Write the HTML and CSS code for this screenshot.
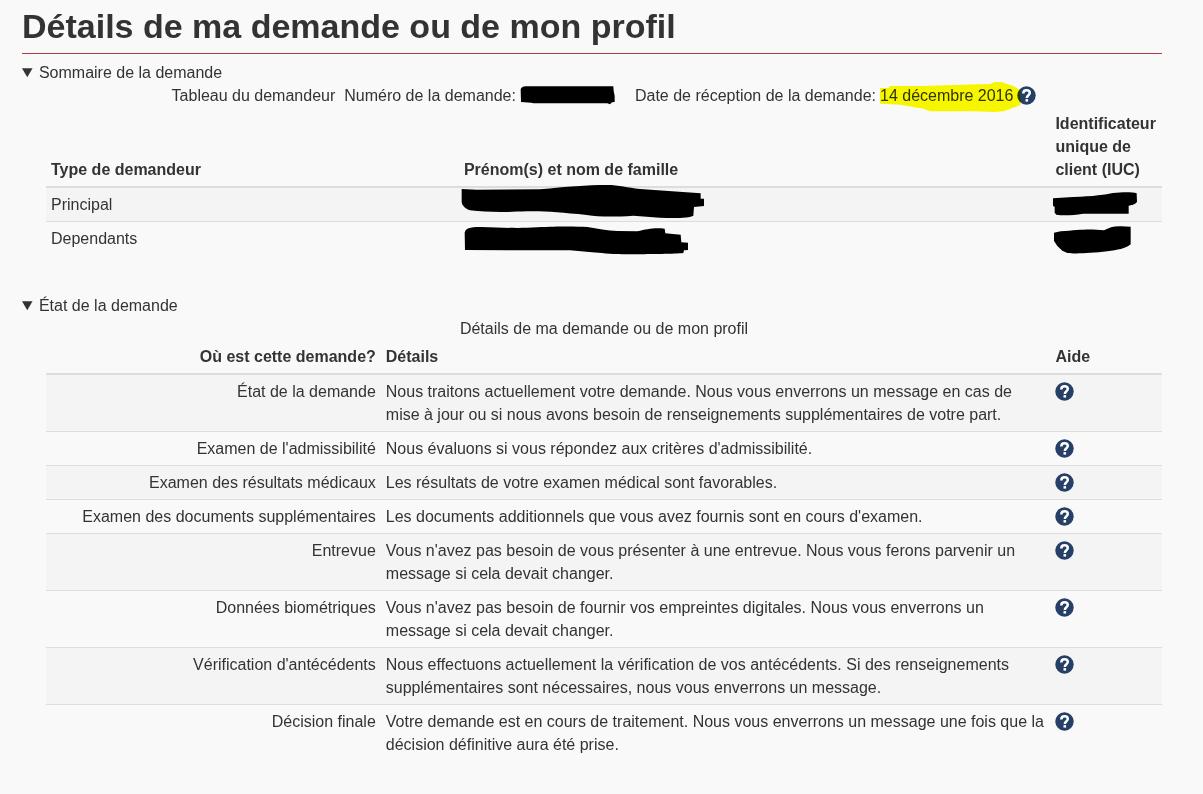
FILE: index.html
```html
<!DOCTYPE html>
<html lang="fr">
<head>
<meta charset="utf-8">
<title>Détails de ma demande ou de mon profil</title>
<link rel="stylesheet" href="styles.css">
</head>
<body>
<svg class="sprite" aria-hidden="true">
  <symbol id="help" viewBox="0 0 19 19">
    <circle class="icon-disc" cx="9.500" cy="9.500" r="9.200"/>
    <path class="icon-hook" d="M6.300 7.400C6.300 5.200 7.500 4.300 9.500 4.300 11.500 4.300 12.800 5.300 12.800 7 12.800 9.200 9.800 9.200 9.800 11.900"/>
    <path class="icon-dot" d="M8.500 13.100H11.100V15.600H8.500Z"/>
  </symbol>
</svg>
<main class="page">
  <h1 class="title">Détails de ma demande ou de mon profil</h1>

  <details class="section" open>
    <summary class="toggle">Sommaire de la demande</summary>
    <div class="panel">
      <table class="grid">
        <caption class="caption"><span class="facts"><span>Tableau du demandeur</span><span class="fact">Numéro de la demande: <svg class="mark-number" viewBox="0 0 285 57" role="img" aria-label="Masqué"><path d="M2 10C4 3 12 0 20 1L280 1 281 15 284 30 284 48 276 49 270 55 262 52 40 52 34 50 3 48Z"/></svg></span><span class="fact fact-date">Date de réception de la demande: <span class="date">14 décembre 2016<svg class="highlight" viewBox="0 0 423 90" aria-hidden="true"><path d="M0 18L25 18 30 12 130 12 240 8 330 6 345 0 365 0 400 12 420 24 422 68 405 76 370 88 345 90 280 88 150 88 130 80 60 68 0 65Z"/></svg></span><a class="help" href="#" aria-label="Aide"><svg class="icon"><use href="#help"/></svg></a></span></span></caption>
        <colgroup><col class="col-type"><col><col class="col-end"></colgroup>
        <thead>
          <tr><th scope="col">Type de demandeur</th><th scope="col">Prénom(s) et nom de famille</th><th scope="col">Identificateur unique de client (IUC)</th></tr>
        </thead>
        <tbody>
          <tr>
            <td>Principal</td>
            <td class="masked"><svg class="mark mark-name-1" viewBox="0 0 735 105" role="img" aria-label="Masqué"><path d="M5 12L50 14 240 13C320 5 380 0 440 0 480 0 500 8 540 12L722 25 722 41 732 41 732 63 702 66 700 92C690 98 650 101 600 98L520 92C460 96 420 96 380 90 300 82 260 78 200 79 130 82 80 82 30 76 12 68 6 60 5 50Z"/></svg></td>
            <td class="masked"><svg class="mark mark-id-1" viewBox="0 0 255 72" role="img" aria-label="Masqué"><path d="M0 19L60 15C120 13 160 8 180 3 210 0 240 0 251 4L252 30C245 38 235 40 227 41L227 65 90 65C60 70 30 71 10 68L5 62 5 44 0 42Z"/></svg></td>
          </tr>
          <tr>
            <td>Dependants</td>
            <td class="masked"><svg class="mark mark-name-2" viewBox="0 0 675 87" role="img" aria-label="Masqué"><path d="M3 72L2 20C5 8 15 3 50 3 120 5 160 8 220 4 300 0 340 2 370 3 400 8 430 14 460 15L520 16C550 10 565 5 602 8L604 22 650 26 652 49 672 50 672 72 660 73 658 81C620 85 480 85 450 84 380 80 350 74 300 73Z"/></svg></td>
            <td class="masked"><svg class="mark mark-id-2" viewBox="0 0 231 84" role="img" aria-label="Masqué"><path d="M0 20L20 16C80 10 110 8 150 13 165 5 180 0 200 1L230 2 230 55C215 68 190 72 160 76 110 82 60 84 40 81L25 74 10 60 0 45Z"/></svg></td>
          </tr>
        </tbody>
      </table>
    </div>
  </details>

  <details class="section" open>
    <summary class="toggle">État de la demande</summary>
    <div class="panel">
      <table class="grid">
        <caption class="caption">Détails de ma demande ou de mon profil</caption>
        <colgroup><col class="col-label"><col><col class="col-end"></colgroup>
        <thead>
          <tr><th scope="col" class="label">Où est cette demande?</th><th scope="col">Détails</th><th scope="col">Aide</th></tr>
        </thead>
        <tbody>
          <tr><td class="label">État de la demande</td><td>Nous traitons actuellement votre demande. Nous vous enverrons un message en cas de mise à jour ou si nous avons besoin de renseignements supplémentaires de votre part.</td><td><a class="help" href="#" aria-label="Aide"><svg class="icon"><use href="#help"/></svg></a></td></tr>
          <tr><td class="label">Examen de l'admissibilité</td><td>Nous évaluons si vous répondez aux critères d'admissibilité.</td><td><a class="help" href="#" aria-label="Aide"><svg class="icon"><use href="#help"/></svg></a></td></tr>
          <tr><td class="label">Examen des résultats médicaux</td><td>Les résultats de votre examen médical sont favorables.</td><td><a class="help" href="#" aria-label="Aide"><svg class="icon"><use href="#help"/></svg></a></td></tr>
          <tr><td class="label">Examen des documents supplémentaires</td><td>Les documents additionnels que vous avez fournis sont en cours d'examen.</td><td><a class="help" href="#" aria-label="Aide"><svg class="icon"><use href="#help"/></svg></a></td></tr>
          <tr><td class="label">Entrevue</td><td>Vous n'avez pas besoin de vous présenter à une entrevue. Nous vous ferons parvenir un message si cela devait changer.</td><td><a class="help" href="#" aria-label="Aide"><svg class="icon"><use href="#help"/></svg></a></td></tr>
          <tr><td class="label">Données biométriques</td><td>Vous n'avez pas besoin de fournir vos empreintes digitales. Nous vous enverrons un message si cela devait changer.</td><td><a class="help" href="#" aria-label="Aide"><svg class="icon"><use href="#help"/></svg></a></td></tr>
          <tr><td class="label">Vérification d'antécédents</td><td>Nous effectuons actuellement la vérification de vos antécédents. Si des renseignements supplémentaires sont nécessaires, nous vous enverrons un message.</td><td><a class="help" href="#" aria-label="Aide"><svg class="icon"><use href="#help"/></svg></a></td></tr>
          <tr><td class="label">Décision finale</td><td>Votre demande est en cours de traitement. Nous vous enverrons un message une fois que la décision définitive aura été prise.</td><td><a class="help" href="#" aria-label="Aide"><svg class="icon"><use href="#help"/></svg></a></td></tr>
        </tbody>
      </table>
    </div>
  </details>
</main>
</body>
</html>
```

FILE: styles.css
```css
* { box-sizing: border-box; }

body {
  margin: 0;
  background: #f9f9f9;
  color: #333;
  font: 16px/23px "Liberation Sans", Arial, sans-serif;
}

.sprite { position: absolute; width: 0; height: 0; }

.page { padding: 6px 41px 0 22px; }

.title {
  margin: 0 0 7px;
  padding-bottom: 6px;
  border-bottom: 1px solid #af3c43;
  font-size: 34px;
  line-height: 41px;
}

.section { margin-bottom: 39px; }

.toggle { cursor: pointer; }

.panel { padding-left: 24px; }

.grid {
  width: 100%;
  table-layout: fixed;
  border-collapse: separate;
  border-spacing: 0;
}

.col-type { width: 37%; }
.col-label { width: 30%; }
.col-end { width: 10%; }

.caption { text-align: center; }

.facts { display: flex; justify-content: center; gap: 9px; }
.fact { display: flex; gap: 4px; }
.fact-date { margin-left: 11px; }

.grid th,
.grid td {
  padding: 5px;
  text-align: left;
  vertical-align: top;
}

.grid th {
  vertical-align: bottom;
  border-bottom: 2px solid #ddd;
}

.grid tbody tr + tr td { border-top: 1px solid #ddd; }
.grid tbody tr:nth-child(odd) { background: #f4f4f4; }

.grid .label { text-align: right; }

.help { display: flex; align-items: center; height: 23px; }
.icon { width: 19px; height: 19px; }
.icon-disc { fill: #263f66; }
.icon-hook { fill: none; stroke: #fff; stroke-width: 2.5; }
.icon-dot { fill: #fff; }

.date { position: relative; }

.highlight {
  position: absolute;
  top: -2px;
  left: 0;
  z-index: 1;
  width: 141px;
  height: 30px;
  fill: #fcfc00;
  mix-blend-mode: multiply;
}

.mark-number { width: 95px; height: 19px; margin-top: 2px; }

.masked { position: relative; }
.mark { position: absolute; z-index: 1; }
.mark-name-1 { top: -3px; left: 1px; width: 245px; height: 35px; }
.mark-name-2 { top: 4px; left: 5px; width: 225px; height: 29px; }
.mark-id-1 { top: 4px; left: 3px; width: 85px; height: 24px; }
.mark-id-2 { top: 4px; left: 4px; width: 77px; height: 28px; }
```
